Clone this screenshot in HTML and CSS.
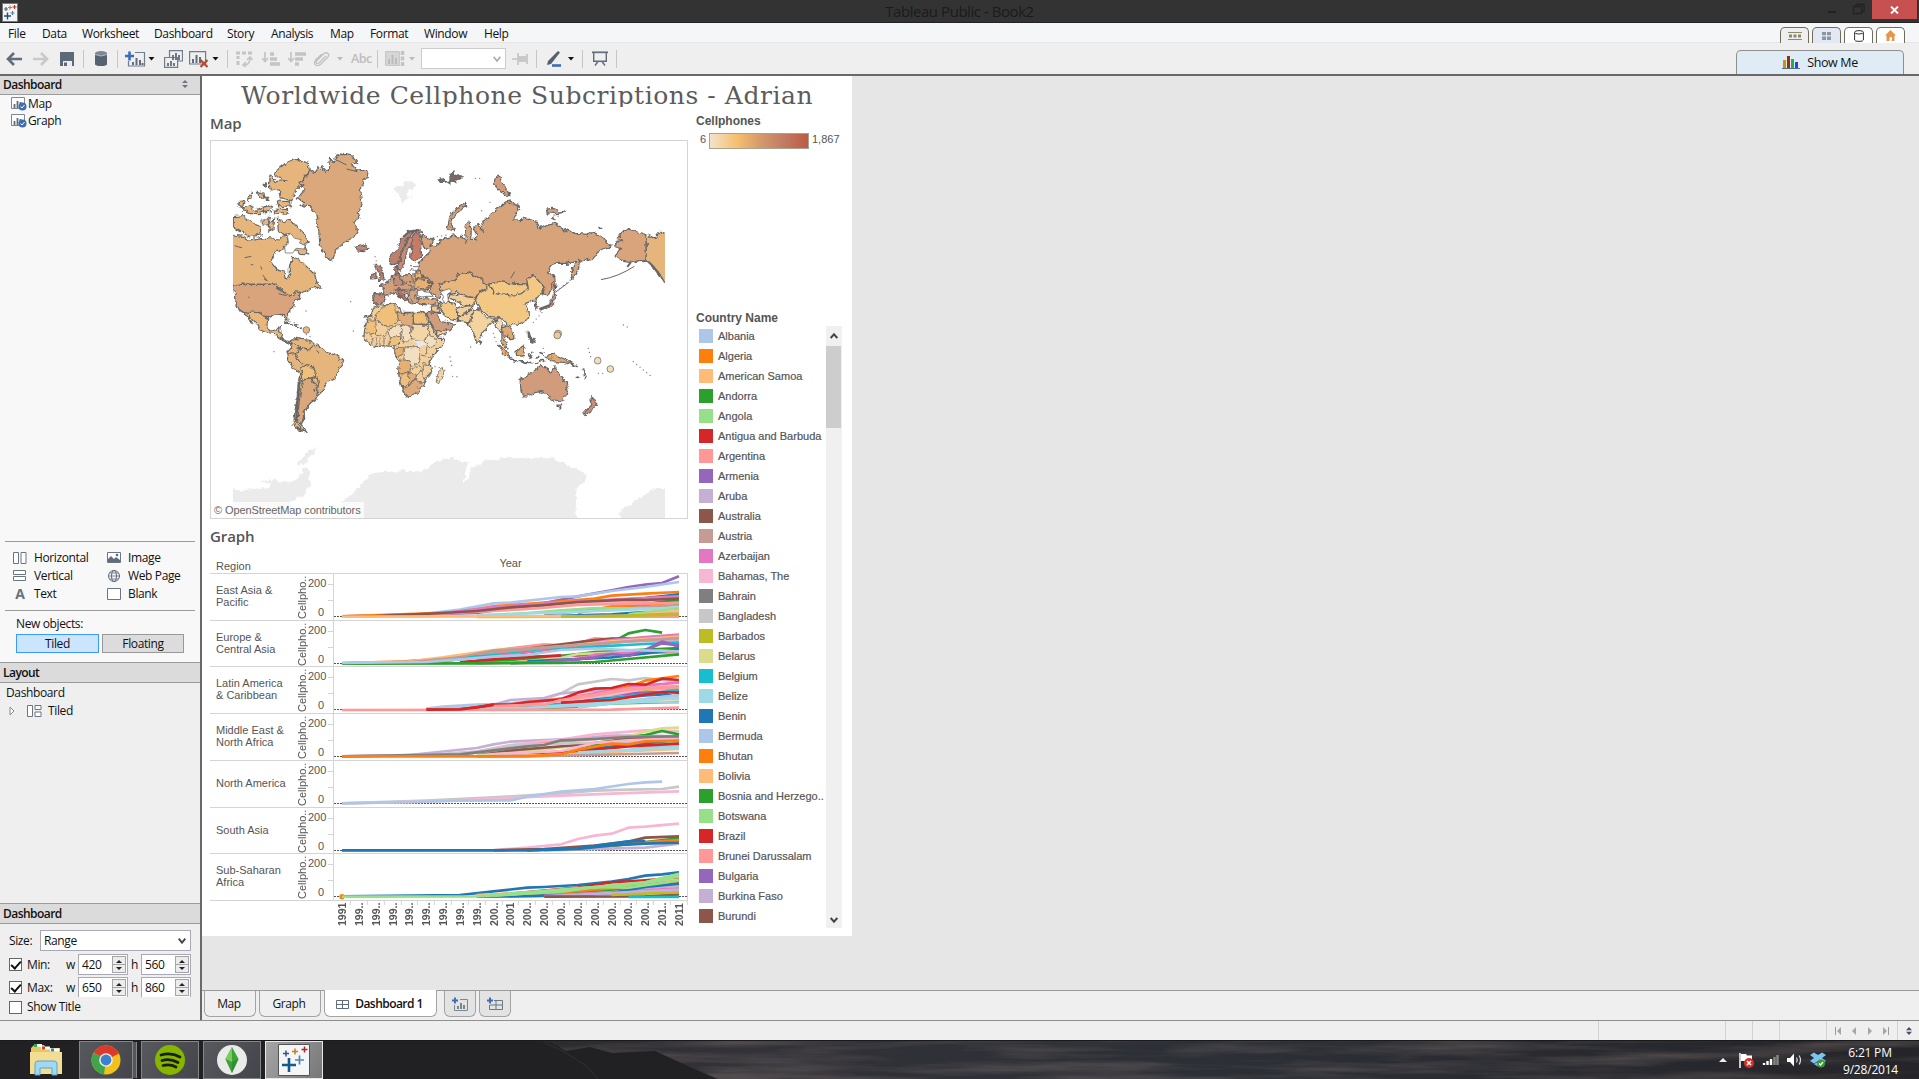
FILE: index.html
```html
<!DOCTYPE html>
<html lang="en">
<head>
<meta charset="utf-8">
<title>Tableau Public - Book2</title>
<link rel="stylesheet" href="styles.css">
</head>
<body>
<header class="titlebar">
  <svg class="app-icon" width="16" height="19" viewBox="0 0 16 19"><rect x=".5" y=".5" width="15" height="18" fill="#f4f4f4" stroke="#777"/><path d="M2 13h7M5.500 9.500v7" stroke="#1f4e79" stroke-width="1.400"/><path d="M2 6h4M4 4v4" stroke="#44628a" stroke-width="1.200"/><path d="M6 4.500h4M8 2.500v4" stroke="#c8811f" stroke-width="1.200"/><path d="M10.500 4h4M12.500 2v4" stroke="#b5332c" stroke-width="1.200"/><path d="M8.500 10h4M10.500 8v4" stroke="#4a82b0" stroke-width="1.200"/></svg>
  <span class="title-text">Tableau Public - Book2</span>
  <div class="win-buttons">
    <svg width="46" height="19" viewBox="0 0 46 19" class="win-min"><path d="M0 12h8" stroke="#222" stroke-width="2"/><path d="M25.500 6.500h8v7h-8zM28 6V4.500h8v7h-2" fill="none" stroke="#222" stroke-width="1.300"/></svg>
    <span class="close"><svg width="9" height="8" viewBox="0 0 9 8"><path d="M1 .500l7 7M8 .500l-7 7" stroke="#fff" stroke-width="1.900"/></svg></span>
  </div>
</header>

<nav class="menubar">
  <div class="menus"><span>File</span><span>Data</span><span>Worksheet</span><span>Dashboard</span><span>Story</span><span>Analysis</span><span>Map</span><span>Format</span><span>Window</span><span>Help</span></div>
  <div class="view-tabs">
    <span><svg width="14" height="8" viewBox="0 0 14 8"><path d="M0 .500h14M0 7.500h14" stroke="#8d8a6c"/><path d="M1 4h3M5.500 4h3M10 4h3" stroke="#8d8a6c" stroke-width="3"/></svg></span>
    <span class="lit"><svg width="9" height="8" viewBox="0 0 9 8"><path d="M0 0h4v3.300H0zM5 0h4v3.300H5zM0 4.600h4V8H0zM5 4.600h4V8H5z" fill="#8b96a5"/></svg></span>
    <span class="plain"><svg width="10" height="12" viewBox="0 0 10 12"><path d="M.600 2.500v7.500q0 1.400 4.400 1.400t4.400-1.400V2.500" fill="none" stroke="#333"/><ellipse cx="5" cy="2.300" rx="4.400" ry="1.700" fill="none" stroke="#333"/></svg></span>
    <span class="plain"><svg width="11" height="11" viewBox="0 0 11 11"><path d="M5.500 0L11 5.500H9.500V11H6.500V7.500H4.500V11H1.500V5.500H0z" fill="#e8954a"/><path d="M5 7h2v3H5z" fill="#fff"/></svg></span>
  </div>
</nav>

<section class="toolbar">
  <div class="tools">
    <span><svg width="16" height="16" viewBox="0 0 16 16"><path d="M8 2L2 8l6 6M2 8h14" fill="none" stroke="#5f6d7d" stroke-width="2.600"/></svg></span>
    <span><svg width="16" height="16" viewBox="0 0 16 16"><path d="M8 2l6 6-6 6M14 8H0" fill="none" stroke="#c9c9c9" stroke-width="2.600"/></svg></span>
    <span><svg width="14" height="14" viewBox="0 0 14 14"><path d="M0 0h14v14H0z" fill="#5c6979"/><path d="M3 9h9v5H3z" fill="#e9ecf0"/><path d="M4 10.500h3V14H4z" fill="#5c6979"/></svg></span>
    <span class="sep"></span>
    <span><svg width="12" height="15" viewBox="0 0 12 15"><path d="M0 2v11q0 2 6 2t6-2V2z" fill="#566270"/><ellipse cx="6" cy="2.200" rx="6" ry="2.200" fill="#7c8794"/><path d="M0 3.500q6 3 12 0" stroke="#dde" fill="none" stroke-width=".7"/></svg></span>
    <span class="sep"></span>
    <span><svg width="30" height="16" viewBox="0 0 30 16"><path d="M10 1.500h9.500V15H3.500V10" fill="none" stroke="#6f7d8e" stroke-width="1.200"/><path d="M8 14v-3M11.500 14V7M15 14V9M17.500 14v-2" stroke="#5f6d7d" stroke-width="2"/><path d="M0 5h9M4.500 .500v9" stroke="#3e6db5" stroke-width="2.600"/><path d="M23.500 6h6l-3 3.500z" fill="#111"/></svg></span>
    <span><svg width="19" height="18" viewBox="0 0 19 18"><path d="M5.500 7V.600h13V11H14M.600 7.500h13V17.400H.600z" fill="none" stroke="#6f7d8e" stroke-width="1.200"/><path d="M9 10V5M12 10V3M15 10V5M4 16v-3M7 16v-5M10 16v-3" stroke="#5f6d7d" stroke-width="1.800"/></svg></span>
    <span><svg width="30" height="18" viewBox="0 0 30 18"><path d="M.600 1.600h16V14H.600z" fill="none" stroke="#6f7d8e" stroke-width="1.200"/><path d="M4 13V9M7.500 13V5M11 13V7" stroke="#5f6d7d" stroke-width="2"/><path d="M11.500 10l7 7M18.500 10l-7 7" stroke="#b8492c" stroke-width="2.200"/><path d="M23.500 7h6l-3 3.500z" fill="#111"/></svg></span>
    <span class="sep"></span>
    <span><svg width="17" height="16" viewBox="0 0 17 16"><path d="M0 2h4M6 2h4M12 2h4M2 5v3M2 10v4" stroke="#c4c4c4" stroke-width="3"/><path d="M8 14q6 0 6-7M10 11l-3 3 3 2M11 9l3-3 2.500 3" fill="none" stroke="#c4c4c4" stroke-width="1.600"/></svg></span>
    <span><svg width="18" height="16" viewBox="0 0 18 16"><path d="M3 1v9M0 7l3 3.500L6 7" stroke="#c4c4c4" stroke-width="1.700" fill="none"/><path d="M8 3h4M8 8h7M8 13h10" stroke="#c4c4c4" stroke-width="3.500"/></svg></span>
    <span><svg width="18" height="16" viewBox="0 0 18 16"><path d="M3 1v9M0 7l3 3.500L6 7" stroke="#c4c4c4" stroke-width="1.700" fill="none"/><path d="M7 3h11M7 8h8M7 13h4" stroke="#c4c4c4" stroke-width="3.500"/></svg></span>
    <span><svg width="30" height="16" viewBox="0 0 30 16"><path d="M13 5l-7 7q-2 1.500-3-.500 0-1 1-2l7-7q2-1.500 4 0 1.500 2-.500 4l-7 7q-3 2-5 .500-2-2 0-5L9 3" fill="none" stroke="#c0c0c0" stroke-width="1.300"/><path d="M24 6h6l-3 3.500z" fill="#bbb"/></svg></span>
    <span class="abc">Abc</span>
    <span class="sep"></span>
    <span><svg width="30" height="15" viewBox="0 0 30 15"><path d="M.600 .600h13.800v13.800H.600z" fill="#d6d6d6" stroke="#c4c4c4"/><path d="M4 13V8M7.500 13V4M11 13V7" stroke="#bcbcbc" stroke-width="2"/><path d="M17.500 0v15" stroke="#c4c4c4" stroke-width="3.500" stroke-dasharray="4 1.500"/><path d="M24 6h6l-3 3.500z" fill="#bbb"/></svg></span>
    <span class="combo"><svg width="8" height="6" viewBox="0 0 8 6"><path d="M.700 .700L4 5 7.300 .700" fill="none" stroke="#aaa" stroke-width="1.600"/></svg></span>
    <span><svg width="16" height="12" viewBox="0 0 16 12"><path d="M0 6h6M6 0v12M15 1v10" stroke="#c4c4c4" stroke-width="1.600"/><path d="M6 3h9v6H6z" fill="#c9c9c9"/></svg></span>
    <span class="sep"></span>
    <span><svg width="28" height="16" viewBox="0 0 28 16"><path d="M2 10L12 0l2 1.500L5 13 1 14z" fill="#56616f"/><path d="M6 14.500h9" stroke="#3e6db5" stroke-width="2.600"/><path d="M22 6h6l-3 3.500z" fill="#111"/></svg></span>
    <span class="sep"></span>
    <span><svg width="16" height="15" viewBox="0 0 16 15"><path d="M0 1.300h16" stroke="#5f6d7d" stroke-width="1.700"/><path d="M1.700 2v8.300h12.600V2M6 10.500L3 14.500M10 10.500l3 4" fill="none" stroke="#5f6d7d" stroke-width="1.400"/></svg></span>
    <span class="sep"></span>
  </div>
  <div class="showme"><svg width="18" height="13" viewBox="0 0 18 13"><path d="M1 4h3v8H1z" fill="#c59410"/><path d="M5 0h3v12H5z" fill="#9b2c10"/><path d="M9 3h3v9H9z" fill="#1fb43c"/><path d="M13 6h3v6h-3z" fill="#2b3cff"/><path d="M0 12.500h18" stroke="#5a6a80"/></svg>Show Me</div>
</section>

<main class="main">
  <aside class="side">
    <div class="panel-head top">Dashboard<svg width="6" height="8" viewBox="0 0 6 8"><path d="M0 3h6L3 0zM0 5h6L3 8z" fill="#6b7683"/></svg></div>
    <div class="sheets">
      <div class="sheet-item"><svg width="16" height="14" viewBox="0 0 16 14"><path d="M.500 .500h13v11H.500z" fill="#fff" stroke="#7c8794"/><path d="M3.500 11V7M6.500 11V4M9.500 8V5" stroke="#5f6d7d" stroke-width="1.800"/><circle cx="11.500" cy="9.500" r="4" fill="#3e6db5"/><path d="M9.500 9.500l1.500 1.500 2.500-3" fill="none" stroke="#fff"/></svg>Map</div>
      <div class="sheet-item"><svg width="16" height="14" viewBox="0 0 16 14"><path d="M.500 .500h13v11H.500z" fill="#fff" stroke="#7c8794"/><path d="M3.500 11V7M6.500 11V4M9.500 8V5" stroke="#5f6d7d" stroke-width="1.800"/><circle cx="11.500" cy="9.500" r="4" fill="#3e6db5"/><path d="M9.500 9.500l1.500 1.500 2.500-3" fill="none" stroke="#fff"/></svg>Graph</div>
    </div>
    <div class="objects">
      <div class="object"><svg width="14" height="12" viewBox="0 0 14 12"><path d="M.500 .500h5v11h-5zM8 .500h5v11H8z" fill="#fff" stroke="#6b7683"/></svg>Horizontal</div>
      <div class="object"><svg width="14" height="12" viewBox="0 0 14 12"><path d="M.500 .500h13v10H.500z" fill="#fff" stroke="#6b7683"/><path d="M1 10V7l3-3 3 3 2-2 4 3v2z" fill="#5f6d7d"/><circle cx="10" cy="3" r="1.300" fill="#3e6db5"/></svg>Image</div>
      <div class="object"><svg width="14" height="12" viewBox="0 0 14 12"><path d="M.500 .500h12v4H.500zM.500 6.500h12v4H.500z" fill="#fff" stroke="#6b7683"/></svg>Vertical</div>
      <div class="object"><svg width="14" height="12" viewBox="0 0 14 12"><circle cx="7" cy="6" r="5.500" fill="none" stroke="#5f6d7d"/><ellipse cx="7" cy="6" rx="2.500" ry="5.500" fill="none" stroke="#5f6d7d"/><path d="M1.500 6h11M2.500 3h9M2.500 9h9" stroke="#5f6d7d" stroke-width=".8"/></svg>Web Page</div>
      <div class="object"><b class="letter">A</b>Text</div>
      <div class="object"><svg width="14" height="12" viewBox="0 0 14 12"><path d="M.500 .500h13v11H.500z" fill="#fff" stroke="#6b7683"/></svg>Blank</div>
    </div>
    <div class="newobj">
      <span>New objects:</span>
      <div class="toggle"><span class="on">Tiled</span><span>Floating</span></div>
    </div>
    <div class="panel-head">Layout</div>
    <div class="layout-tree">
      <div>Dashboard</div>
      <div class="node"><svg width="34" height="12" viewBox="0 0 34 12"><path d="M1 2v8l4-4z" fill="#fff" stroke="#8a8a8a"/><path d="M18.500 .500h5v11h-5zM26 .500h6v4h-6zM26 7h6v4.500h-6z" fill="#fff" stroke="#6b7683"/></svg>Tiled</div>
    </div>
    <div class="panel-head">Dashboard</div>
    <div class="size">
      <div class="size-row range">Size:<span class="select">Range<svg width="8" height="6" viewBox="0 0 8 6"><path d="M.700 .700L4 4.700 7.300 .700" fill="none" stroke="#444" stroke-width="1.900"/></svg></span></div>
      <div class="size-row dims"><i class="check on"></i><span class="lab">Min:</span><span class="wh">w</span><span class="num">420<i></i></span><span class="wh">h</span><span class="num">560<i></i></span></div>
      <div class="size-row dims cut"><i class="check on"></i><span class="lab">Max:</span><span class="wh">w</span><span class="num">650<i></i></span><span class="wh">h</span><span class="num">860<i></i></span></div>
      <div class="size-row"><i class="check"></i><span class="lab">Show Title</span></div>
    </div>
  </aside>

  <section class="work">
    <div class="canvas">
      <article class="dash">
        <h1>Worldwide Cellphone Subcriptions - Adrian</h1>
        <div class="dash-left">
          <h2>Map</h2>
          <div class="map">
            <svg width="476" height="377" viewBox="33 198 1428 1131">
              <defs>
                <filter id="coast" filterUnits="userSpaceOnUse" x="33" y="198" width="1428" height="1131" color-interpolation-filters="sRGB"><feTurbulence type="fractalNoise" baseFrequency=".06" numOctaves="3" seed="7" result="f"/><feDisplacementMap in="SourceGraphic" in2="f" scale="18" xChannelSelector="R" yChannelSelector="G"/></filter>
                <clipPath id="world"><path d="M99 198H1395V1329H99z"/></clipPath>
              </defs>
              <g clip-path="url(#world)">
                <g filter="url(#coast)" fill="#ebebeb">
                  <path d="M425 1282L470 1245 492 1220 510 1195 560 1190 620 1185 665 1190 700 1165 740 1147 790 1162 804 1165 788 1222 800 1215 815 1180 850 1160 890 1150 1000 1148 1055 1150 1090 1165 1150 1190 1160 1215 1130 1240 1125 1345H425z"/>
                  <path d="M80 1242L140 1248 170 1240 205 1240 215 1225 180 1218 215 1215 260 1222 290 1215 310 1180 326 1175 330 1235 310 1260 270 1280 250 1345H80z"/>
                  <path d="M285 1170l20-15 20-28 30-12-12 18-20 12-8 22z"/>
                  <path d="M1255 1310L1300 1280 1350 1245 1420 1238V1345H1270z"/>
                  <path d="M585 332l22 2 10-14 24-2 4 14-20 12-2 20 14 2-18 6-12 14-8-22-14-14z"/>
                  <path d="M488 752l4-14 12-12 12 4-10 8-2 14z"/>
                </g>
                <g filter="url(#coast)" stroke="#666" stroke-width="3.600" stroke-linejoin="round">
                  <g fill="#e6b57b">
                    <path d="M80 478L130 484 150 495 180 488 215 492 240 495 255 475 262 500 250 520 225 533 212 560 228 583 255 592 260 612 268 608 268 580 274 545 300 555 320 575 345 600 350 620 362 636 335 640 305 655 285 650 262 665 250 655 235 640 225 628H80z"/>
                    <path d="M232 430L250 438 270 433 290 455 310 472 328 505 312 508 326 540 300 538 280 520 285 495 262 475 235 470z"/>
                    <path d="M100 425L130 422 150 440 180 455 184 480 150 485 130 475 100 455z"/>
                    <path d="M225 290L260 262 290 253 328 265 330 285 310 310 300 335 285 350 275 378 240 368 242 345 215 345 206 315 212 300 228 320 262 315 230 308z"/>
                    <path d="M232 378l36 2 4 12-36 4zM222 402l44 2-2 14-40-4zM130 400l18-8 22 14 14-6 14 10-22 6-24 0-22-8zM112 392l10-16 12 6-6 18zM140 370l14-14 4 12-12 8zM172 350l20 4 2 14-16 2zM192 395l8-6 14 6-4 18-16 0zM186 432l22-2-4 20-16 0zM210 440l14-8-6 34-12 6z"/>
                    <path d="M192 330l6-4 4 8-6 2zM196 366l10 2-2 8-8 0z"/>
                    <path d="M1338 478L1365 490 1380 472 1410 470V640L1392 620 1380 598 1360 575 1338 557z"/>
                  </g>
                  <path fill="#d9a47b" d="M1338 478L1305 468 1280 462 1262 475 1254 488 1268 496 1250 500 1244 516 1264 520 1248 540 1262 558 1290 562 1312 555 1338 558z"/>
                  <path fill="#dba87b" d="M430 235L455 240 470 262 455 272 465 282 500 290 506 300 490 320 480 350 486 380 475 410 480 430 460 440 472 465 462 485 430 505 408 525 397 558 375 545 360 510 355 460 345 410 330 395 300 392 312 382 292 368 315 345 300 325 318 300 335 285 340 298 356 278 368 292 366 272 385 290 388 250 398 262 408 245z"/>
                  <path fill="#d9a47b" d="M101 628L225 628 238 640 255 652 270 665 290 655 302 650 298 668 280 682 278 700 262 712 264 738 256 735 250 718 225 720 203 732 192 720 175 712 145 712 118 705 105 678z"/>
                  <path fill="#e9b77b" d="M118 705L145 712 175 712 192 720 203 735 200 760 212 768 228 764 238 752 236 770 248 776 245 790 262 798 285 802 275 806 248 797 228 780 205 775 180 765 172 748 150 725 143 720 158 746 148 740 133 715z"/>
                  <path fill="#e6b57b" d="M272 800L290 790 310 795 330 795 345 810 368 822 378 832 400 838 428 855 425 870 410 890 408 910 380 925 372 945 350 965 345 975 330 985 320 1000 312 1010 314 1030 303 1048 320 1068 300 1072 282 1050 283 1020 290 980 297 940 302 895 280 880 262 850 260 835 272 820z"/>
                  <path fill="#dba87b" d="M308 915L332 912 355 935 350 965 345 975 330 985 320 1000 312 1010 310 1030 303 1048 292 1030 300 960z"/>
                  <path fill="#f0c07b" d="M302 880L325 866 345 890 346 905 310 915z"/>
                  <path fill="none" d="M302 895L296 960 290 1040 304 1064M262 838L292 835 300 818 278 806M300 818L330 822 340 812M292 835L288 850 312 866M335 912L352 906 356 930 340 950M350 822L356 832"/>
                  <path fill="#f3cf9c" d="M520 700L545 690 590 686 600 700 605 712 640 712 678 712 690 740 703 770 712 790 735 790 730 805 700 840 690 860 695 890 680 905 672 930 655 950 635 962 615 962 605 935 595 900 600 860 585 835 582 815 555 812 530 815 505 805 492 785 495 760 500 735 515 715z"/>
                  <g stroke-width="2.400">
                  <path fill="#f0c07b" d="M557 690L587 687 590 725 593 740 560 760 527 733 530 715zM640 713L675 713 685 748H640zM500 735H527L530 775 495 778zM597 893L628 893 625 915 618 935 607 935zM568 785L600 785 598 805 580 815 568 808z"/>
                  <path fill="#deab7b" d="M592 712L615 716 640 713V757L594 738zM628 893L650 900 645 920 625 930zM607 935L620 935 630 925 650 915 665 920 670 930 655 950 635 962 615 962z"/>
                  <path fill="#f3dfc0" d="M568 760L600 748 608 755 600 785H570zM608 748L632 757V785L612 805 605 780zM686 778L705 790 712 800 705 812 685 815 672 800zM615 815L655 815 662 830 655 865 635 870 612 855z"/>
                  <path fill="#f3d5a6" d="M640 748H685L686 775 670 800 640 795 632 780zM715 890L730 877 732 890 720 925 708 918z"/>
                  <path fill="#e8e8ec" stroke="none" d="M640 797L668 797 675 812 655 814z"/>
                  <path fill="#e8b070" d="M598 855L622 857 632 870 630 893H597zM585 820l22 0 0 20-15 5z"/>
                  <path fill="none" d="M527 735L562 760 560 780 535 785 528 775M510 785l8 20M525 790l6 22M540 790v20M552 788v22M600 785l-2 30M662 840l30 5M665 865l25 5M632 880l28-10 10 15-20 15M670 870l-2 30 6 20M680 815l0 25M650 935l8 6"/>
                  </g>
                  <path fill="#d09c7b" d="M678 712L705 715 722 735 750 745 767 748 750 768 708 768 690 740z"/>
                  <path fill="#f3cf97" d="M708 768L740 765 735 778 712 785zM750 655L780 660 800 665 830 668 820 690 800 690 770 680 745 670zM773 700L800 688 820 690 800 715 775 725zM775 728L800 715 818 695 830 705 812 735 805 745 775 735z"/>
                  <path fill="#f3d39f" d="M812 740L820 705 838 700 850 720 875 732 890 735 870 745 850 770 838 800 830 802 818 765 800 745zM838 798l7 5-4 8z"/>
                  <path fill="#f3c885" d="M716 685L735 680 765 685 773 705 772 735 745 730 724 708zM690 690L712 690 722 715 705 715 692 708z"/>
                  <path fill="#e0ab78" d="M650 672L680 668 712 672 715 685 690 690 665 688 650 685z"/>
                  <path fill="#d6a37b" d="M692 515L715 505 735 490 768 482 788 485 800 505 795 450 806 435 814 470 812 490 832 490 820 460 835 445 850 470 845 440 865 430 885 405 925 375 958 395 940 435 980 432 1012 440 1018 462 1040 452 1065 445 1090 462 1125 475 1165 478 1190 475 1215 495 1232 515 1215 520 1195 530 1180 550 1150 557 1138 552 1136 580 1118 612 1112 592 1130 557 1100 565 1065 565 1042 590 1065 605 1060 640 1040 660 1025 657 1035 640 1000 600 985 612 980 630 945 628 900 620 862 628 830 605 800 593 772 598 765 618 720 625 725 655 720 672 690 655 695 620 668 605 655 580 665 555 690 530 670 515 662 482 700 495z"/>
                  <path fill="#e9b77b" d="M720 625L765 618 772 598 800 593 830 605 862 628 845 650 830 668 800 665 765 650 740 655 722 645z"/>
                  <path fill="#f3c885" d="M820 672L848 650 865 632 882 655 930 663 965 655 985 640 980 612 1000 600 1035 640 1010 670 990 680 975 686 988 715 985 730 950 750 925 748 905 730 875 728 840 700zM865 628L900 620 945 628 980 630 985 640 965 655 930 663 885 655z"/>
                  <path fill="#f3dfc0" d="M888 735L900 725 908 740 905 755 915 775 905 770 885 755z"/>
                  <path fill="#e0a970" d="M905 755L925 750 940 770 942 790 930 795 925 780 912 785 924 822 915 818 906 800zM893 808L910 820 932 850 920 848 905 830zM948 830L970 812 978 820 970 842 950 845zM985 765L990 780 1003 800 995 805 985 785zM1040 845L1060 838 1085 850 1132 872 1090 862 1055 860z"/>
                  <path fill="none" stroke-width="5" d="M930 852L960 860 1000 863M1005 865L1030 858M985 835l8 16M990 830l12 0M1010 840l5 8M1018 832l14 6M262 742l30 12 14 10M255 740l12 6M520 722l-30 4M1000 800l3 6M1150 880l5 30M1130 905l8 4M595 535l-10 20"/>
                  <path fill="#d09c7b" d="M960 912L975 905 1000 890 1018 875 1040 875 1045 888 1057 895 1065 872 1078 900 1098 920 1104 945 1092 975 1070 980 1050 970 1042 955 1020 950 1000 955 985 963 967 963 962 940zM1070 990L1085 990 1080 1003z"/>
                  <path fill="#c98f75" d="M1172 965L1192 985 1180 1000 1155 1022 1150 1015 1175 990zM1060 600L1068 628 1064 650 1056 640zM1062 655L1070 662 1058 690 1040 700 1018 708 1035 695 1055 680zM1005 675L1015 690 1008 702z"/>
                  <path fill="#d09c7b" d="M798 385L770 398 745 430 738 460 762 468 752 440 775 410 800 395zM888 302L900 305 905 325 925 345 930 362 915 360 900 345 882 325zM1040 402L1060 400 1090 412 1070 416 1045 414zM1055 430l8-4 2 8zM1195 460l12 0"/>
                  <path fill="#7d6a60" d="M714 315l18-4 6 8-14 6zM750 300l8-12 4 16 12-8 10 10-20 8 4 10-18-4zM740 320l8-2 2 8z"/>
                  <path fill="#c78a78" d="M465 515L490 508 502 518 490 530 472 528z"/>
                  <path fill="#d3a07b" d="M518 655L550 660 553 640 540 632 570 615 580 600 600 598 605 600 635 598 660 590 668 605 690 620 695 635 670 650 650 660 655 680 640 690 625 680 625 665 605 645 598 640 615 680 590 660 575 650 560 665 545 685 522 688z"/>
                  <path fill="#c58c76" d="M518 655L550 660 558 668 545 685 522 688zM578 602L600 598 606 625 585 632z"/>
                  <path fill="#c36f60" d="M585 645l18-2 8 18 14 16-10 2-18-18z"/>
                  <path fill="#e8b070" d="M645 590l18 2 4 16-22 6zM640 618l40-6 14 18-22 12-30-6z"/>
                  <path fill="#bf7f6d" d="M570 545L590 525 605 490 625 470 655 462 668 475 640 472 620 495 605 530 598 562 575 572z"/>
                  <path fill="#c98b78" d="M605 530L625 490 640 485 638 510 620 530 615 560 600 590 595 570z"/>
                  <path fill="#c77a68" d="M640 478L658 475 665 540 650 558 632 550 635 520z"/>
                  <path fill="#bd7f6c" d="M525 572L540 570 545 590 557 612 535 622 540 600zM515 595L528 592V610L515 612zM586 575l10 0-4 22-10 0z"/>
                  <path fill="none" stroke-width="2.800" d="M606 600l28 0 4 18-30 6M606 625l30 8 0 14-26-4M625 650l24-12 8 20-18 6M604 640l20 14 2 24M640 660l12 12M630 572l24 0M632 584l24 4M634 670l8 20"/>
                </g>
                <path fill="#fff" stroke="#666" stroke-width="2.500" d="M735 645l14-4 6 8-12 8 2 20-8 10-10-14 4-8-10-14z"/>
                <path fill="#fff" stroke="#666" stroke-width="2.500" d="M652 648l14-4 6 6 16 2 12 12-20 0-14 2-14-4z"/>
                <path fill="#fff" stroke="#777" stroke-width="2.500" d="M262 482l10-6 12 14 20 4-6 10 18 8-4 10-24-2-10 14-22 0-2-18 12-12z"/>
                <path fill="none" stroke="#666" stroke-width="3" d="M640 712V748H684M104 512l12 4 10 2M134 548l20-4M152 568l8 2M188 600l14 18M192 612l10 6M182 574l4 10M932 610l12-20M228 640l26 14M236 656l22 6M1203 614q50-8 100-40M1310 558q30-6 48 12t34 48M1066 652l40-30M146 665l2 4M400 250l40 20M440 282l32 8M370 280l8 14"/>
                <path fill="none" stroke="#666" stroke-width="6" d="M1345 560q22 20 34 44M296 920l-8 120M290 1055l14 12M610 485l20-16 28-4M1292 562l-10 14M1018 702l32-12M985 770l6 20M992 786l6 20"/>
                <g fill="none" stroke="#777" stroke-width="4" stroke-linecap="round" stroke-dasharray="0 13">
                  <path d="M452 680l12 4M270 740q30 4 50 40M460 768l10 6M222 830l8 4M318 708h1M1165 820l8 30M1300 860l56 46M1270 750l16 8M750 846l6 30M758 904l20 2M812 816l2 2M1195 895l20 0M1000 742l30-34M1080 640l50-40M525 545l4 14M712 485l36-6M700 490h1M826 310h14M845 407h1M1062 420l14 4M870 382h1M880 775l10 30M1030 820l6 30M330 785v14M705 875l14 3"/>
                </g>
                <g stroke="#777" stroke-width="2.500" fill="#f0c890"><circle cx="319" cy="765" r="10" fill="#e6b57b"/><circle cx="1074" cy="776" r="10.500"/><circle cx="1072" cy="781" r="10.500"/><circle cx="1193" cy="857" r="10" fill="#f3dfc0"/><circle cx="1231" cy="882" r="10" fill="#f3dfc0"/></g>
              </g>
            </svg>
            <span class="attribution">© OpenStreetMap contributors</span>
          </div>
          <h2 class="graph-title">Graph</h2>
          <div class="chart-head"><span class="region">Region</span><span class="year">Year</span></div>
          <div class="chart" id="chart"></div>
          <div class="axis" id="axis"></div>
        </div>
        <div class="dash-right">
          <h3>Cellphones</h3>
          <div class="ramp"><span>6</span><i></i><span>1,867</span></div>
          <h3 class="country">Country Name</h3>
          <div class="legend">
            <div class="legend-list" id="legend"></div>
            <div class="scroll"><svg width="8" height="6" viewBox="0 0 8 6"><path d="M.700 5L4 1.300 7.300 5" fill="none" stroke="#444" stroke-width="2"/></svg><i></i><svg width="8" height="6" viewBox="0 0 8 6"><path d="M.700 1L4 4.700 7.300 1" fill="none" stroke="#444" stroke-width="2"/></svg></div>
          </div>
        </div>
      </article>
    </div>
    <div class="tabs">
      <span class="t-map">Map</span><span class="t-graph">Graph</span>
      <span class="active"><svg width="13" height="9" viewBox="0 0 13 9"><path d="M.500 .500h12v8H.500zM6.500 .500v8M.500 4.500h12" fill="none" stroke="#5f6d7d"/></svg>Dashboard 1</span>
      <span class="add"><svg width="16" height="14" viewBox="0 0 16 14"><path d="M8 2.500h7.500v11H2.500V8" fill="none" stroke="#7c8794"/><path d="M6 12V9M9 12V6M12 12V8" stroke="#5f6d7d" stroke-width="1.600"/><path d="M0 3.500h6M3 .500v6" stroke="#3e6db5" stroke-width="1.900"/></svg></span>
      <span class="add"><svg width="16" height="14" viewBox="0 0 16 14"><path d="M7 3.500h8.500v9H2.500V8M9 4v8M3 8h12" fill="none" stroke="#6b7683"/><path d="M0 3.500h6M3 .500v6" stroke="#3e6db5" stroke-width="1.900"/></svg></span>
    </div>
  </section>
</main>

<div class="status"><span></span><span></span><span></span><span></span><span class="pager"><svg width="55" height="8" viewBox="0 0 55 8"><path d="M.500 0v8M53.500 0v8" stroke="#9a9a9a"/><path d="M6 0v8L2 4zM21 0v8l-4-4zM33 0v8l4-4zM48 0v8l4-4z" fill="#a5a5a5"/></svg></span><span><svg width="6" height="8" viewBox="0 0 6 8"><path d="M0 3.200h6L3 0zM0 4.800h6L3 8z" fill="#46506a"/></svg></span></div>

<footer class="taskbar">
  <svg class="scene" width="1919" height="39" viewBox="0 0 1919 39">
    <defs>
      <linearGradient id="dusk"><stop offset="0" stop-color="#2b2b2e"/><stop offset=".15" stop-color="#323238"/><stop offset=".5" stop-color="#2c2f36"/><stop offset="1" stop-color="#252529"/></linearGradient>
      <filter id="cloud" x="0" y="0" width="1" height="1"><feTurbulence type="fractalNoise" baseFrequency=".006 .09" numOctaves="4" seed="3"/><feColorMatrix values="0 0 0 0 .36  0 0 0 0 .27  0 0 0 0 .24  .7 0 0 0 -.28"/></filter>
    </defs>
    <path d="M540 0H1919V39H540z" fill="url(#dusk)"/>
    <path d="M560 0H1919V39H560z" filter="url(#cloud)"/>
    <path d="M540 0L552 2 566 10 590 6 612 12 655 10 690 26 720 39H540z" fill="#212124"/>
    <path d="M545 2l18 8 22 14 14 15" stroke="#303236" fill="none"/>
  </svg>
  <div class="apps">
    <span class="app explorer"><svg width="34" height="32" viewBox="0 0 34 32"><path d="M2 4l3-3h10l2 3h14v26H2z" fill="#e5c665"/><path d="M5 1.500h8M12 4h9M21 6h9" stroke="#fff" stroke-width="3"/><path d="M5 1.500h3" stroke="#2faa45" stroke-width="3"/><path d="M13 4h3" stroke="#d24326" stroke-width="3"/><path d="M22 6h3" stroke="#2f80d0" stroke-width="3"/><path d="M1 8h32v22H1z" fill="#f3dd92"/><path d="M6 31V20q0-3 3-3h16q3 0 3 3v11h-5v-7H11v7z" fill="#9fd8f2" stroke="#5aa4cf"/></svg></span>
    <span class="app open chrome"><svg width="30" height="30" viewBox="0 0 30 30"><circle cx="15" cy="15" r="14.500" fill="#f2c21a"/><path d="M15 15L2.500 7.500A14.500 14.500 0 0 1 28 8.500z" fill="#d93a2b"/><path d="M15 15L2.500 7.500A14.500 14.500 0 0 0 13 29.300z" fill="#3fa64b"/><circle cx="15" cy="15" r="6.800" fill="#eee"/><circle cx="15" cy="15" r="5.400" fill="#3d7fd0"/></svg></span>
    <span class="app open"><svg width="30" height="30" viewBox="0 0 30 30"><circle cx="15" cy="15" r="15" fill="#86b600"/><path d="M6 10q10-3 19 2M7 15.500q8-2.500 16 2M8 20.500q7-2 13 1.500" fill="none" stroke="#1a1f00" stroke-width="2.700" stroke-linecap="round"/></svg></span>
    <span class="app open"><svg width="30" height="30" viewBox="0 0 30 30"><circle cx="15" cy="15" r="15" fill="#e8ebe8"/><path d="M15 2l6.500 12L15 28 8.500 14z" fill="#3da43a"/><path d="M15 2v26L8.500 14z" fill="#7ccb5f"/><path d="M8.500 14L15 17l6.500-3L15 28z" fill="#27872d" opacity=".7"/></svg></span>
    <span class="app current"><svg width="32" height="32" viewBox="0 0 32 32"><path d="M.500 .500h31v31H.500z" fill="#f4f5f6" stroke="#555"/><path d="M4 21h14M11 14v14" stroke="#155a8a" stroke-width="2.600"/><path d="M5 9.500h6M8 6.500v6" stroke="#3c4f86" stroke-width="1.500"/><path d="M14 7.500h6M17 4.500v6" stroke="#c87b1c" stroke-width="1.500"/><path d="M23.500 5.500h6M26.500 2.500v6" stroke="#a52a2a" stroke-width="1.500"/><path d="M17 16h9M21.500 11.500v9" stroke="#4a86b5" stroke-width="1.700"/></svg></span>
  </div>
  <div class="tray">
    <svg width="107" height="18" viewBox="0 0 107 18"><path d="M0 11h8L4 7z" fill="#eee"/><path d="M21 2v15" stroke="#fff" stroke-width="1.500"/><path d="M22 3h5l1 1.500h5v7h-6L26 10h-4z" fill="#fff"/><circle cx="30" cy="12" r="5" fill="#d93025"/><path d="M28 10l4 4M32 10l-4 4" stroke="#fff" stroke-width="1.500"/><path d="M45 14v-2M48.500 14v-4M52 14V8" stroke="#fff" stroke-width="2.400"/><path d="M55.500 14V6M58.500 14V4" stroke="#888" stroke-width="2.400"/><path d="M68 7h3l4-4.500v13L71 11h-3z" fill="#fff"/><path d="M77.500 6.500q1.500 2.500 0 5M80 4.500q3 4.500 0 9" fill="none" stroke="#ddd" stroke-width="1.200"/><path d="M91 4l4-2.500L99 4l4-2.500L107 4l-4 3 4 3-4 2.500-4-2.500-4 2.500L91 10l4-3zM95 13l4-2 4 2-4 2.500z" fill="#7cc4f0"/><circle cx="102" cy="12.500" r="4" fill="#3a9a38"/><path d="M100 12.500l1.500 1.500 2.500-3" fill="none" stroke="#fff" stroke-width="1.300"/></svg>
    <div class="clock"><span>6:21 PM</span><span>9/28/2014</span></div>
  </div>
</footer>
<script src="app.js"></script>
</body>
</html>
```

FILE: styles.css
```css
* { box-sizing: border-box; }
body {
  margin: 0; width: 1919px; height: 1079px; overflow: hidden;
  display: grid; grid-template-rows: 23px 20px 33px 945px 19px 39px;
  background: #efefef; color: #111;
  font: 12px/18px "Open Sans", "Noto Sans", sans-serif; letter-spacing: -.37px;
}
svg { display: block; flex: none; }
h1, h2, h3 { margin: 0; font-weight: normal; }

.titlebar { background: #333; display: grid; grid-template-columns: 240px 1fr 240px; border-bottom: 1px solid #222; }
.app-icon { margin: 3px 0 0 2px; }
.title-text { text-align: center; font-size: 15px; line-height: 22px; color: #1b1b1b; letter-spacing: -.45px; }
.win-buttons { display: flex; justify-content: flex-end; padding-right: 2px; }
.win-min { margin-right: -2px; }
.close { width: 45px; height: 19px; background: #c75050; display: flex; align-items: center; justify-content: center; }

.menubar { background: #f5f6f8; display: flex; justify-content: space-between; border-bottom: 1px solid #e6e6e6; }
.menus { display: grid; grid-template-columns: 34px 40px 72px 73px 44px 59px 40px 54px 60px 40px; padding: 2px 0 0 8px; }
.view-tabs { display: flex; gap: 3px; padding: 4px 14px 0 0; }
.view-tabs span { width: 29px; height: 16px; border: 1px solid #6e6c5c; border-bottom: 0; border-radius: 5px 5px 0 0; background: #efefef; display: flex; align-items: center; justify-content: center; }
.view-tabs .lit { background: #e3e8f3; }
.view-tabs .plain { background: #fff; }

.toolbar { display: flex; justify-content: space-between; border-bottom: 2px solid #6c6c6c; border-image: linear-gradient(#a0a0a0 50%, #696969 50%) 2; padding: 0 15px 0 6px; }
.tools { display: grid; align-items: center; grid-template-columns: 27px 27px 23px 12px 22px 8px 39px 25px 38px 9px 26px 26px 25px 38px 26px 8px 36px 91px 24px 10px 36px 10px 24px 2px; }
.sep { width: 1px; height: 18px; background: #c6c6c6; }
.abc { color: #bdbdbd; font-size: 12.500px; letter-spacing: -.5px; font-weight: 600; }
.combo { width: 85px; height: 21px; background: #fff; border: 1px solid #ccc; display: flex; align-items: center; justify-content: flex-end; padding-right: 4px; }
.showme { width: 168px; height: 24px; align-self: flex-end; border: 1px solid #8f8f8f; border-bottom: 0; border-radius: 5px 5px 0 0; background: #dfecf6; display: flex; align-items: center; justify-content: center; gap: 7px; font-size: 12.500px; }

.main { display: grid; grid-template-columns: 202px 1fr; border-bottom: 1px solid #8e8e8e; }
.side { background: #efefef; border-right: 2px solid #696969; height: 944px; display: flex; flex-direction: column; overflow: hidden; }
.panel-head { height: 21px; background: #dbdbdb; border-top: 1px solid #9b9b9b; border-bottom: 1px solid #9b9b9b; font-weight: 600; padding-left: 3px; line-height: 19px; letter-spacing: -.55px; }
.panel-head.top { height: 19px; border-top: 0; line-height: 17px; display: flex; justify-content: space-between; align-items: flex-start; padding-right: 12px; }
.panel-head.top svg { margin-top: 4px; }
.sheets { background: #f8f8f8; height: 446px; padding: 0 0 0 11px; }
.sheet-item { display: flex; align-items: center; gap: 1px; height: 17px; }
.objects { background: #f8f8f8; display: grid; grid-template-columns: 94px 1fr; grid-auto-rows: 18px; padding: 7px 0 8px 13px; height: 70px; border: solid #9b9b9b; border-width: 1px 0; border-image: linear-gradient(90deg, #f8f8f8 6px, #9b9b9b 6px, #9b9b9b 194px, #f8f8f8 194px) 1; }
.object { display: flex; align-items: center; gap: 7px; }
.letter { width: 14px; text-align: center; color: #66727f; font-size: 14px; }
.newobj { background: #f8f8f8; height: 51px; padding: 4px 0 0 16px; }
.toggle { display: grid; grid-template-columns: 83px 82px; gap: 3px; margin-top: 1px; }
.toggle span { height: 19px; line-height: 17px; border: 1px solid #999; background: #dcdcdc; text-align: center; }
.toggle .on { background: #cbe5ff; border-color: #3b9aff; }
.layout-tree { height: 220px; padding: 1px 0 0 6px; }
.node { display: flex; gap: 5px; align-items: center; padding-left: 3px; }
.size { padding: 6px 0 0 9px; }
.size-row { display: flex; align-items: center; height: 18px; }
.range { height: 21px; margin-bottom: 3px; display: grid; grid-template-columns: 31px 151px; }
.select { width: 151px; height: 21px; border: 1px solid #a9a9b5; background: #fff; display: flex; justify-content: space-between; align-items: center; padding: 0 4px 0 3px; }
.check { width: 13px; height: 13px; border: 1px solid #666; background: #fff; display: grid; place-items: center; }
.check.on::after { content: ""; width: 4px; height: 8px; margin-top: -2px; border: solid #111; border-width: 0 2px 2px 0; transform: rotate(42deg); }
.lab { padding-left: 5px; }
.dims { display: grid; grid-template-columns: 13px 44px 12px 50px 13px 50px; height: 21px; margin-bottom: 2px; }
.cut { height: 20px; overflow: hidden; margin-bottom: 1px; }
.wh { text-align: left; }
.num + .wh { padding-left: 3px; }
.num { height: 21px; border: 1px solid #a9a9b5; background: #fff; display: flex; justify-content: space-between; padding: 1px 1px 0 3px; }
.num i { width: 14px; height: 17px; border: 1px solid #a5a5a5; display: grid; grid-template-rows: 8px 7px; justify-items: center; align-items: center; background: linear-gradient(#ececec 7px, #a5a5a5 7px 8px, #ececec 8px); }
.num i::before, .num i::after { content: ""; border: 3px solid transparent; }
.num i::before { border-top: 0; border-bottom-color: #222; }
.num i::after { border-bottom: 0; border-top-color: #222; }
.cut .num { align-self: start; }

.work { background: #efefef; display: flex; flex-direction: column; }
.canvas { height: 915px; background: #e6e6e6; border-bottom: 1px solid #9b9b9b; }
.dash { width: 650px; height: 860px; background: #fff; color: #555; display: grid; grid-template: 31px 829px / 486px 164px; font-family: "Liberation Sans", Arial, sans-serif; font-size: 11px; line-height: 13px; letter-spacing: 0; }
.dash h1 { grid-column: 1 / 3; padding-left: 39px; font: 25px/39px "DejaVu Serif", serif; letter-spacing: .55px; white-space: nowrap; color: #5c5c5c; height: 31px; overflow: hidden; }
.dash-left { padding-left: 8px; }
.dash h2 { font: 600 15px/33px "Open Sans", "Noto Sans", sans-serif; height: 33px; line-height: 32px; letter-spacing: -.1px; }
.map { width: 478px; height: 379px; border: 1px solid #d4d4d4; position: relative; }
.attribution { position: absolute; left: 0; bottom: 0; width: 153px; height: 16px; line-height: 16px; padding-left: 3px; background: rgba(255,255,255,.75); color: #666; letter-spacing: -.1px; white-space: nowrap; }
.dash .graph-title { height: 38px; line-height: 35px; }
.chart-head { display: grid; grid-template-columns: 123px 1fr; height: 17px; border-bottom: 1px solid #d4d4d4; }
.region { padding: 3px 0 0 6px; }
.year { text-align: center; }
.chart-row { display: grid; grid-template-columns: 80px 20px 23px 355px; border-bottom: 1px solid #d4d4d4; }
.name { padding: 0 0 2px 6px; align-self: center; white-space: pre; line-height: 12.500px; }
.measure { writing-mode: vertical-rl; transform: rotate(180deg); text-align: center; line-height: 24px; font-size: 11px; height: 46px; overflow: hidden; }
.scale { text-align: right; display: flex; flex-direction: column; justify-content: space-between; padding: 3px 9px 1px 0; margin-left: -2px; background: linear-gradient(#d4d4d4, #d4d4d4) right 10px / 5px 1px no-repeat, linear-gradient(#d4d4d4, #d4d4d4) right 26px / 5px 1px no-repeat; }
.plot { border: solid #d4d4d4; border-width: 0 1px; height: 100%; overflow: hidden; }
.axis { display: grid; grid-template-columns: repeat(21, 16.850px); padding-left: 124px; height: 28px; }
.axis span { writing-mode: vertical-rl; transform: rotate(180deg); line-height: 16.800px; padding: 0 0 2px; font-weight: bold; font-size: 10.500px; text-align: right; height: 26px; color: #555; background: linear-gradient(#d4d4d4, #d4d4d4) 0 100% / 1px 4px no-repeat; }

.dash-right { padding-left: 8px; }
.dash h3 { font-size: 12px; line-height: 14px; font-weight: bold; padding-top: 7px; height: 26px; }
.ramp { display: flex; align-items: center; gap: 3px; padding-left: 4px; height: 16px; }
.ramp span { margin-top: -3px; }
.ramp i { width: 100px; height: 16px; border: 1px solid #a8a290; background: linear-gradient(90deg, #f3e3cb, #f5bf6d 28%, #d3996c 52%, #c27a62 76%, #be5a42); }
.ramp span:first-child { width: 6px; }
.dash h3.country { padding-top: 162px; height: 177px; }
.legend { display: grid; grid-template-columns: 130px 16px; height: 602px; }
.legend-list { padding: 0 0 0 3px; }
.legend-item { height: 20px; display: flex; align-items: center; gap: 5px; white-space: nowrap; letter-spacing: 0; -webkit-text-stroke: .2px #555; }
.legend-item i { width: 14px; height: 14px; flex: none; }
.scroll { background: #f0f0f0; display: grid; grid-template-rows: 20px 82px 1fr; justify-items: center; align-items: center; }
.scroll i { width: 15px; height: 82px; background: #cdcdcd; justify-self: start; }
.scroll svg:last-child { align-self: end; margin-bottom: 5px; }

.tabs { display: flex; padding-left: 2px; height: 26px; }
.tabs span { border: 1px solid #a3a3a3; border-top: 0; border-radius: 0 0 6px 6px; height: 26px; display: flex; align-items: center; justify-content: center; margin-right: 3px; }
.tabs .t-map { width: 52px; padding-right: 2px; }
.tabs .t-graph { width: 62px; padding-right: 2px; }
.tabs .active { width: 113px; height: 27px; margin-top: -1px; background: #fff; font-weight: 600; gap: 6px; margin-right: 7px; letter-spacing: -.55px; padding: 2px 2px 0 0; }
.tabs .add { width: 32px; background: #e3e3e3; }

.status { display: grid; grid-template-columns: 127px 27px 27px 47px 71px 22px; padding-left: 1598px; }
.status span { border-left: 1px solid #d2d2d2; display: flex; align-items: center; justify-content: center; }

.taskbar { background: #212124; display: flex; justify-content: space-between; position: relative; color: #fff; border-top: 1px solid #1a1a1c; }
.scene { position: absolute; left: 0; top: 0; }
.apps, .tray { position: relative; display: flex; }
.apps { padding-left: 17px; gap: 4px; }
.app { width: 58px; height: 38px; display: flex; align-items: center; justify-content: center; }
.open { border: 1px solid #85868a; background: linear-gradient(120deg, #58595e, #44454a); }
.chrome { width: 54px; margin-right: 4px; box-shadow: 4px 0 0 -1px #55565a, 5px 0 0 -1px #85868a; }
.current { border: 1px solid #e8e8e8; background: linear-gradient(120deg, #a5a5a5, #777); }
.tray { align-items: center; padding-right: 22px; gap: 17px; }
.clock { width: 54px; display: flex; flex-direction: column; text-align: center; line-height: 17px; white-space: nowrap; letter-spacing: -.2px; padding-top: 1px; }
```

FILE: app.js
```js
// Tableau 20 palette
const BLUE = '#1f77b4', LBLUE = '#aec7e8', ORANGE = '#ff7f0e', LORANGE = '#ffbb78', GREEN = '#2ca02c',
  LGREEN = '#98df8a', RED = '#d62728', PINK = '#ff9896', PURPLE = '#9467bd', LPURPLE = '#c5b0d5',
  BROWN = '#8c564b', LBROWN = '#c49c94', MAGENTA = '#e377c2', LMAGENTA = '#f7b6d2', GRAY = '#7f7f7f',
  LGRAY = '#c7c7c7', OLIVE = '#bcbd22', LOLIVE = '#dbdb8d', CYAN = '#17becf', LCYAN = '#9edae5';
const PALETTE = [LBLUE, ORANGE, LORANGE, GREEN, LGREEN, RED, PINK, PURPLE, LPURPLE, BROWN, LBROWN,
  MAGENTA, LMAGENTA, GRAY, LGRAY, OLIVE, LOLIVE, CYAN, LCYAN, BLUE];

const COUNTRIES = ['Albania', 'Algeria', 'American Samoa', 'Andorra', 'Angola', 'Antigua and Barbuda',
  'Argentina', 'Armenia', 'Aruba', 'Australia', 'Austria', 'Azerbaijan', 'Bahamas, The', 'Bahrain',
  'Bangladesh', 'Barbados', 'Belarus', 'Belgium', 'Belize', 'Benin', 'Bermuda', 'Bhutan', 'Bolivia',
  'Bosnia and Herzego..', 'Botswana', 'Brazil', 'Brunei Darussalam', 'Bulgaria', 'Burkina Faso', 'Burundi'];

document.getElementById('legend').innerHTML = COUNTRIES.map((name, i) =>
  `<div class="legend-item"><i style="background:${PALETTE[i % 20]}"></i>${name}</div>`).join('');

// Each series is [colour, "yearIndex,height ..."]; heights are in plot units (200 = 97 units)
const REGIONS = [
  ['East Asia &\nPacific', 47, [
    [PURPLE, '0,0 8,10 12,40 14,60 16,78 17,88 18,95 19,100 20,120'],
    [LBLUE, '0,0 4,2 6,14 7,20 9,39 10,41 13,58 14,60 16,76 18,88 20,103'],
    [ORANGE, '0,0 7,12 9,30 13,45 15,53 16,62 18,68 20,73'],
    [BLUE, '10,20 14,40 18,55 20,66'], [MAGENTA, '5,4 9,28 12,38 16,50 20,60'],
    [LMAGENTA, '8,14 12,26 15,42 18,44 20,46'], [GREEN, '12,8 16,22 20,50'],
    [ORANGE, '14,10 16,30 18,34 20,42'], [PINK, '4,2 8,14 11,22 14,34 17,38 20,40'],
    [LBROWN, '12,8 16,20 18,28 20,34'], [LGREEN, '8,2 11,10 13,18 15,25 17,24 20,24'],
    [LCYAN, '8,3 12,10 16,18 20,26'], [BROWN, '0,0 2,1 4,5 6,10 8,16 10,27 12,34 14,43 17,50 18,49 20,53'],
    [BLUE, '12,0 16,6 18,13 19,12'], [LGREEN, '17,6 20,24'], [LORANGE, '17,2 20,16'],
    [LBROWN, '13,0 17,2 20,8'], [PINK, '10,-1 20,-1'], [OLIVE, '8,-2 14,-1 17,2 20,5'], [LORANGE, '0,-1 13,0']]],
  ['Europe &\nCentral Asia', 46, [
    [GREEN, '0,0 5,4 10,28 14,50 16,62 17,90 18,100 19,92'],
    [PINK, '0,0 6,10 9,38 10,45 12,57 13,54 14,60 15,75 16,72 18,74 20,72'],
    [RED, '8,20 10,40 13,50 14,62 16,74 20,70'], [BROWN, '0,0 3,4 6,12 9,30 12,50 15,70 17,75 20,72'],
    [MAGENTA, '8,18 12,40 16,70 18,79 20,86'], [LORANGE, '0,1 4,6 6,18 9,40 12,46 16,66 20,80'],
    [LBROWN, '4,3 7,18 9,38 12,48 15,58 18,70 20,74'], [LPURPLE, '8,24 12,44 17,66 20,68'],
    [CYAN, '6,6 8,20 9,28 12,44 15,50 18,58 20,62'], [ORANGE, '10,14 15,26 20,34'],
    [PURPLE, '8,12 12,20 16,28 18,40 19,66 20,50'], [GREEN, '8,4 12,16 15,34 20,46'],
    [RED, '7,4 10,16 13,24'], [LOLIVE, '10,2 13,16 14,28 20,40'],
    [MAGENTA, '8,0 11,4 14,10 15,26 20,38'], [BLUE, '11,6 16,18 20,42'],
    [PURPLE, '10,0 12,4 15,18 16,28 17,22 18,40 19,60 20,54'],
    [LBROWN, '8,28 12,46 16,62 20,76'],
    [LBLUE, '9,20 11,25 13,40 15,44 17,40 20,36'],
    [GREEN, '0,-1 8,0 13,1 15,4 17,13 20,27'],
    [LBLUE, '0,1 5,4 7,12 9,20']]],
  ['Latin America\n& Caribbean', 47, [
    [LGRAY, '5,1 9,12 12,30 13,48 14,75 16,91 17,87 18,94 19,88 20,80'],
    [LBLUE, '5,2 6,8 8,14 11,18 14,30 20,60'], [LPURPLE, '8,8 9,14 10,28 12,34 13,48 16,60 20,70'],
    [ORANGE, '10,8 14,34 17,68 18,86 20,100'], [OLIVE, '10,10 13,32 16,50 20,64'],
    [MAGENTA, '12,24 15,48 18,72 20,80'], [PURPLE, '11,14 14,38 20,56'], [BLUE, '11,8 15,30 18,42 20,48'],
    [LMAGENTA, '8,4 12,18 16,44 18,62 19,58 20,40'], [LORANGE, '8,0 12,8 16,24 20,32'],
    [PINK, '8,4 12,26 15,44 17,62 20,68'], [CYAN, '9,0 11,6 14,20 17,38 20,58'],
    [GREEN, '10,0 14,8 16,18 20,22'], [LBLUE, '9,0 14,10 20,42'], [LCYAN, '8,0 11,4 14,16 17,24 20,34'],
    [RED, '5,-1 7,0 8,6 9,14 10,14 11,22 13,30 14,50 15,62 16,64 17,76 18,74 19,92 20,88'],
    [PINK, '9,10 12,14 13,28 15,42 17,60 20,66'],
    [RED, '13,20 16,28 18,44 19,52 20,50'], [LCYAN, '14,6 16,18 18,22 20,20'],
    [PINK, '0,-2 16,-1 20,5'], [RED, '5,-1 7,0 8,6 9,14']]],
  ['Middle East &\nNorth Africa', 47, [
    [LPURPLE, '0,0 4,4 8,25 9,36 10,44 14,53 16,62 18,62 20,60'], [LMAGENTA, '0,0 6,6 8,14 10,34 13,50 15,66 18,78 20,76'],
    [LOLIVE, '8,8 12,20 15,40 17,60 18,74 19,84 20,86'], [GREEN, '14,20 17,56 18,64 19,76 20,66'],
    [BROWN, '6,4 10,18 14,34 17,52 20,58'], [PINK, '8,10 12,40 17,60 20,56'], [LGRAY, '5,4 8,14 10,32 14,40 20,46'],
    [LGREEN, '8,0 12,8 16,30 20,44'], [BLUE, '14,18 20,50'], [LBLUE, '8,0 12,4 16,12 18,26 20,30'],
    [RED, '10,2 13,10 17,30 20,38'], [LORANGE, '8,0 12,4 20,22'], [LMAGENTA, '9,6 13,16 15,40 17,48 20,54'],
    [LBROWN, '8,0 12,1 20,10'], [LCYAN, '14,12 20,26'],
    [GRAY, '0,0 7,6 9,18 11,30 12,34 13,48 15,52 17,58 20,60'], [ORANGE, '0,0 11,0 13,6 14,20 16,38 17,36 18,45 20,47']]],
  ['North America', 47, [
    [LGRAY, '0,0 5,8 9,18 13,30 15,38 17,41 19,43 20,50'],
    [LMAGENTA, '0,0 5,5 9,14 12,21 16,29 20,36'],
    [LBLUE, '0,0 4,4 7,8 10,9 11,20 13,35 15,43 17,58 18,63 19,65']]],
  ['South Asia', 46, [
    [LMAGENTA, '0,0 9,1 11,8 13,18 14,34 15,44 16,50 17,68 18,71 20,80'],
    [GREEN, '14,2 20,36'], [ORANGE, '14,4 18,24 20,31'], [LPURPLE, '12,0 18,8 20,20'],
    [BROWN, '9,0 12,4 15,14 17,26 18,38 20,42'], [BLUE, '11,0 14,6 16,20 17,27 18,28'],
    [BLUE, '0,0 11,0 14,4 16,15 18,20 20,23']]],
  ['Sub-Saharan\nAfrica', 47, [
    [BLUE, '0,0 7,4 9,15 11,26 12,28 14,34 16,44 17,52 18,62 19,66 20,72'],
    [RED, '9,4 14,26 16,42 18,48 20,56'], [LORANGE, '8,4 14,20 20,50'], [LPURPLE, '10,2 14,10 20,32'],
    [LBROWN, '9,0 12,4 20,42'], [GREEN, '11,4 16,20 20,46'], [ORANGE, '12,8 20,40'], [MAGENTA, '9,0 12,2 16,12 20,24'],
    [LMAGENTA, '13,2 20,18'], [BLUE, '8,-1 13,2 16,10 18,28 20,38'], [LPURPLE, '12,0 20,20'],
    [BROWN, '12,-1 18,0 20,6'], [OLIVE, '16,4 20,12'], [CYAN, '17,-2 20,-2'],
    [LGREEN, '9,4 12,16 14,24 16,30 18,42 20,68'], [LGREEN, '9,2 12,12 15,28 17,26 19,40 20,48'],
    [LGREEN, '10,6 13,20 15,28 18,40 20,60'], [LGREEN, '0,-1 8,0 10,6 13,14 16,34 18,42 20,66']]]
];

const X0 = 24, STEP = 50.55, BASE = 127;
document.getElementById('chart').innerHTML = REGIONS.map(([name, height, series], row) => {
  const lines = series.map(([color, data]) => {
    const pts = data.split(' ').map(p => {
      const [i, h] = p.split(',').map(Number);
      return `${(X0 + i * STEP).toFixed(1)},${BASE - h}`;
    }).join(' ');
    return `<polyline points="${pts}" stroke="${color}"/>`;
  }).join('');
  const marker = row === 6 ? '<circle cx="24" cy="128" r="8" fill="#ff7f0e"/>' : '';
  return `<div class="chart-row" style="height:${height}px">
    <span class="name">${name}</span><span class="measure">Cellpho..</span>
    <span class="scale"><span>200</span><span>0</span></span>
    <div class="plot"><svg width="353" height="${height - 1}" viewBox="0 0 1059 ${(height - 1) * 3}">
      <path d="M0 127.500H1059" stroke="#555" stroke-width="3" stroke-dasharray="6 3"/>${marker}
      <g fill="none" stroke-width="8" stroke-linejoin="round">${lines}</g></svg></div></div>`;
}).join('');

document.getElementById('axis').innerHTML = Array.from({ length: 21 }, (_, i) => {
  const year = String(1991 + i);
  return `<span>${i % 10 === 0 ? year : year.slice(0, 3) + '..'}</span>`;
}).join('');
```
